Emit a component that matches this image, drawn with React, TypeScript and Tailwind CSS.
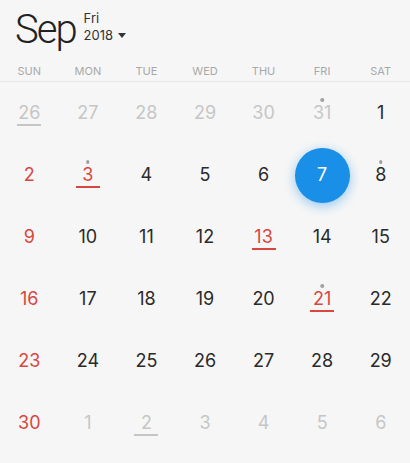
import React from 'react';

type Day = {
  n: number;
  tone: 'muted' | 'red' | 'dark';
  underline?: boolean;
  dot?: boolean;
  selected?: boolean;
};

const weekdays = ['SUN', 'MON', 'TUE', 'WED', 'THU', 'FRI', 'SAT'];

const d = (n: number, tone: Day['tone'], extra: Partial<Day> = {}): Day => ({ n, tone, ...extra });

const weeks: Day[][] = [
  [d(26, 'muted', { underline: true }), d(27, 'muted'), d(28, 'muted'), d(29, 'muted'), d(30, 'muted'), d(31, 'muted', { dot: true }), d(1, 'dark')],
  [d(2, 'red'), d(3, 'red', { underline: true, dot: true }), d(4, 'dark'), d(5, 'dark'), d(6, 'dark'), d(7, 'dark', { selected: true }), d(8, 'dark', { dot: true })],
  [d(9, 'red'), d(10, 'dark'), d(11, 'dark'), d(12, 'dark'), d(13, 'red', { underline: true }), d(14, 'dark'), d(15, 'dark')],
  [d(16, 'red'), d(17, 'dark'), d(18, 'dark'), d(19, 'dark'), d(20, 'dark'), d(21, 'red', { underline: true, dot: true }), d(22, 'dark')],
  [d(23, 'red'), d(24, 'dark'), d(25, 'dark'), d(26, 'dark'), d(27, 'dark'), d(28, 'dark'), d(29, 'dark')],
  [d(30, 'red'), d(1, 'muted'), d(2, 'muted', { underline: true }), d(3, 'muted'), d(4, 'muted'), d(5, 'muted'), d(6, 'muted')],
];

function DayCell({ day }: { day: Day }) {
  const color =
    day.tone === 'muted' ? 'text-[#c6c6c6]' : day.tone === 'red' ? 'text-[#d8473f]' : 'text-[#2a2a2a]';
  const lineColor = day.tone === 'red' ? 'bg-[#d8473f]' : 'bg-[#c6c6c6]';

  return (
    <div className="relative flex h-[62px] items-center justify-center">
      {day.selected && (
        <div className="absolute h-[55px] w-[55px] rounded-full bg-[#1a8fe8] shadow-[0_3px_12px_rgba(26,143,232,0.45)]" />
      )}
      {day.dot && !day.selected && (
        <span className="absolute left-1/2 top-[16px] h-[3.5px] w-[3.5px] -translate-x-1/2 rounded-full bg-[#a0a0a0]" />
      )}
      <span className={`relative text-[18px] leading-none ${day.selected ? 'text-white' : color}`}>{day.n}</span>
      {day.underline && (
        <span className={`absolute left-1/2 top-[42px] h-[1.5px] w-[24px] -translate-x-1/2 ${lineColor}`} />
      )}
    </div>
  );
}

export default function App() {
  return (
    <div className="h-[463px] w-[410px] overflow-hidden bg-[#f6f6f6] font-['Inter',sans-serif]">
      {/* Month header */}
      <div className="flex items-start pl-[15px] pt-[6px]">
        <span className="font-['Roboto',sans-serif] text-[40px] font-light leading-[48px] tracking-[-2px] text-[#222]">
          Sep
        </span>
        <div className="ml-[8px] mt-[4px] flex flex-col text-[#333]">
          <span className="text-[13px] leading-[16px]">Fri</span>
          <span className="flex items-center text-[13px] leading-[18px]">
            2018
            <svg className="ml-[5px]" width="8" height="5" viewBox="0 0 8 5">
              <path d="M0 0h8L4 5z" fill="#333" />
            </svg>
          </span>
        </div>
      </div>

      {/* Weekday labels */}
      <div className="mt-[10px] grid grid-cols-7 border-b border-[#e6e6e6] pb-[3px]">
        {weekdays.map((w) => (
          <div key={w} className="text-center text-[11px] leading-[14px] text-[#a8a8a8]">
            {w}
          </div>
        ))}
      </div>

      {/* Days */}
      <div className="grid grid-cols-7">
        {weeks.flat().map((day, i) => (
          <DayCell key={i} day={day} />
        ))}
      </div>
    </div>
  );
}
